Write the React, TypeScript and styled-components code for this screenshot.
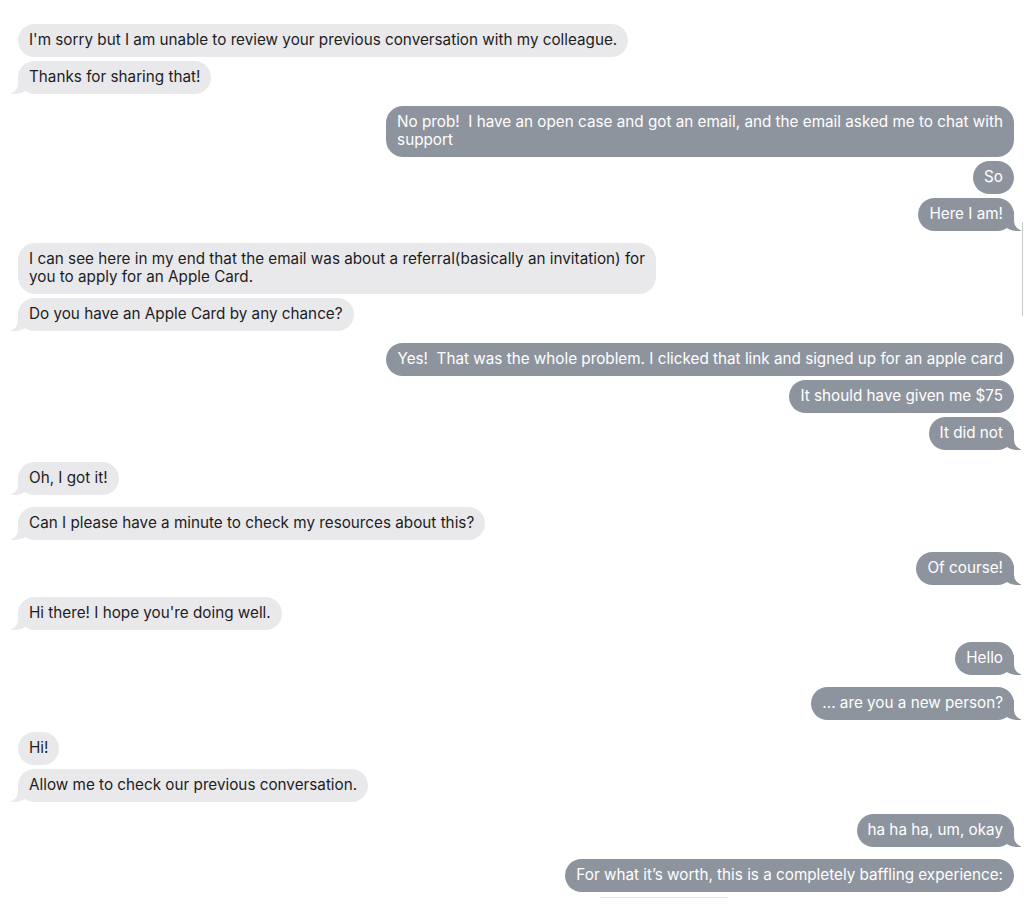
import React from "react";
import styled, { createGlobalStyle, css } from "styled-components";

type Side = "in" | "out";

interface MessageGroup {
  side: Side;
  messages: string[];
}

const thread: MessageGroup[] = [
  {
    side: "in",
    messages: [
      "I'm sorry but I am unable to review your previous conversation with my colleague.",
      "Thanks for sharing that!",
    ],
  },
  {
    side: "out",
    messages: [
      "No prob!  I have an open case and got an email, and the email asked me to chat with\nsupport",
      "So",
      "Here I am!",
    ],
  },
  {
    side: "in",
    messages: [
      "I can see here in my end that the email was about a referral(basically an invitation) for\nyou to apply for an Apple Card.",
      "Do you have an Apple Card by any chance?",
    ],
  },
  {
    side: "out",
    messages: [
      "Yes!  That was the whole problem. I clicked that link and signed up for an apple card",
      "It should have given me $75",
      "It did not",
    ],
  },
  { side: "in", messages: ["Oh, I got it!"] },
  { side: "in", messages: ["Can I please have a minute to check my resources about this?"] },
  { side: "out", messages: ["Of course!"] },
  { side: "in", messages: ["Hi there! I hope you're doing well."] },
  { side: "out", messages: ["Hello"] },
  { side: "out", messages: ["... are you a new person?"] },
  { side: "in", messages: ["Hi!", "Allow me to check our previous conversation."] },
  { side: "out", messages: ["ha ha ha, um, okay"] },
];

const lastGroup: MessageGroup = {
  side: "out",
  messages: ["For what it\u2019s worth, this is a completely baffling experience:"],
};

const GlobalStyle = createGlobalStyle`
  html, body {
    margin: 0;
    padding: 0;
    background: #ffffff;
    overflow: hidden;
  }
  body {
    font-family: "Inter", "Liberation Sans", sans-serif;
    -webkit-font-smoothing: antialiased;
  }
`;

const Thread = styled.div`
  display: flex;
  flex-direction: column;
  gap: 12px;
  height: 904px;
  box-sizing: border-box;
  padding: 24px 10px 0 18px;
  overflow: hidden;
`;

const Group = styled.div<{ $side: Side }>`
  display: flex;
  flex-direction: column;
  align-items: ${(p) => (p.$side === "out" ? "flex-end" : "flex-start")};
  gap: 4px;
`;

const inTail = css`
  &::before {
    left: -7px;
    background: #e9e9eb;
    border-bottom-right-radius: 15px;
  }
  &::after {
    left: -10px;
    border-bottom-right-radius: 10px;
  }
`;

const outTail = css`
  &::before {
    right: -7px;
    background: #8e949e;
    border-bottom-left-radius: 15px;
  }
  &::after {
    right: -10px;
    border-bottom-left-radius: 10px;
  }
`;

const Bubble = styled.div<{ $side: Side; $tail: boolean }>`
  position: relative;
  z-index: 0;
  padding: 7px 11px 8px;
  border-radius: 17px;
  font-size: 15.25px;
  line-height: 18px;
  white-space: pre;
  background: ${(p) => (p.$side === "out" ? "#8e949e" : "#e9e9eb")};
  color: ${(p) => (p.$side === "out" ? "#ffffff" : "#1d1d1f")};

  ${(p) =>
    p.$tail &&
    css`
      &::before,
      &::after {
        content: "";
        position: absolute;
        z-index: -1;
        bottom: 0;
        height: 20px;
      }
      &::before {
        width: 20px;
      }
      &::after {
        width: 10px;
        background: #ffffff;
      }
      ${p.$side === "out" ? outTail : inTail}
    `}
`;

const Preview = styled.div`
  display: flex;
  flex-direction: column;
  align-items: flex-start;
  gap: 6px;
  width: 380px;
  margin-right: 54px;
  margin-top: 1px;
`;

const PreviewEdge = styled.div<{ $width: number; $indent: number; $tone: string }>`
  width: ${(p) => p.$width}px;
  margin-left: ${(p) => p.$indent}px;
  height: 1px;
  border-radius: 1px;
  background: ${(p) => p.$tone};
`;

const ScrollThumb = styled.div`
  position: fixed;
  top: 222px;
  right: 1px;
  width: 1px;
  height: 94px;
  background: #c9c9cc;
`;

function App() {
  return (
    <>
      <GlobalStyle />
      <Thread>
        {thread.map((group, gi) => (
          <Group key={gi} $side={group.side}>
            {group.messages.map((text, mi) => (
              <Bubble
                key={mi}
                $side={group.side}
                $tail={mi === group.messages.length - 1}
              >
                {text}
              </Bubble>
            ))}
          </Group>
        ))}
        <Group $side={lastGroup.side}>
          {lastGroup.messages.map((text, mi) => (
            <Bubble key={mi} $side={lastGroup.side} $tail={false}>
              {text}
            </Bubble>
          ))}
          <Preview>
            <PreviewEdge $width={128} $indent={20} $tone="#e4e4ea" />
            <PreviewEdge $width={262} $indent={118} $tone="#f0f0f3" />
          </Preview>
        </Group>
      </Thread>
      <ScrollThumb />
    </>
  );
}

export default App;
